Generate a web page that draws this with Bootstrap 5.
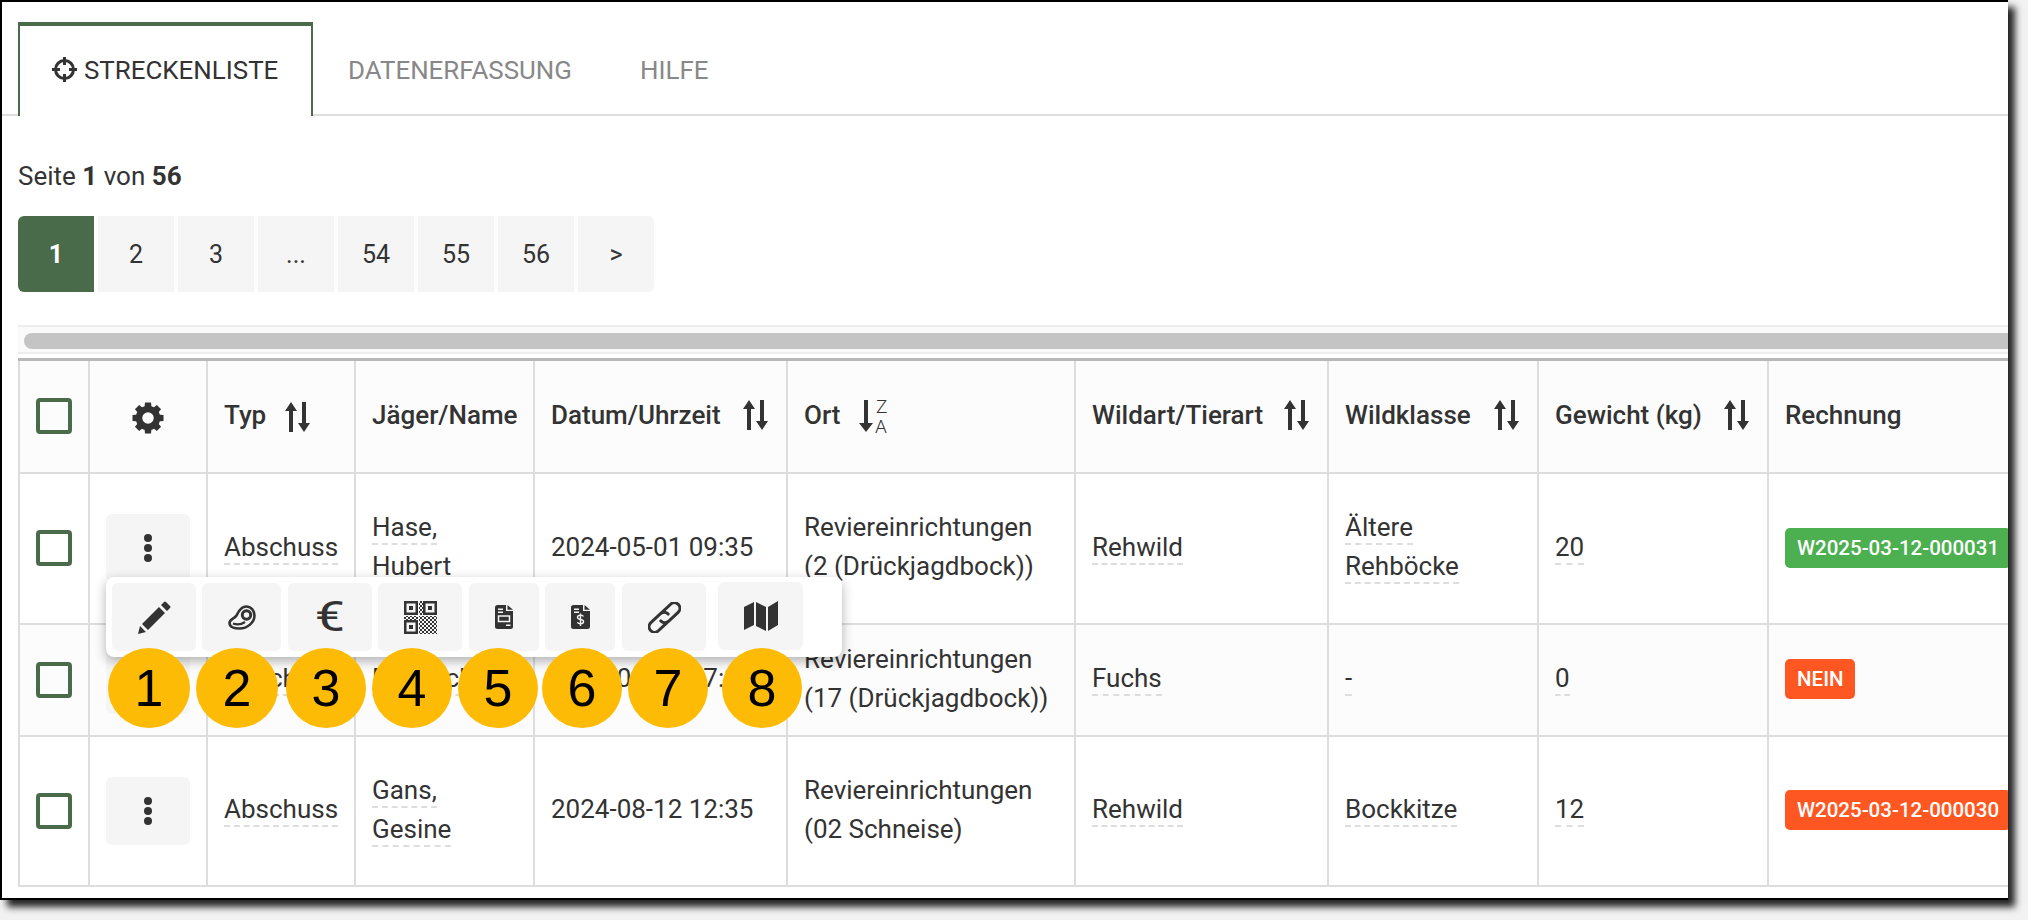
<!DOCTYPE html>
<html lang="de">
<head>
<meta charset="utf-8">
<title>Streckenliste</title>
<link rel="stylesheet" href="https://cdn.jsdelivr.net/npm/bootstrap@5.3.0/dist/css/bootstrap.min.css">
<style>
html,body{margin:0;background:#f2f2f2;height:920px;overflow:hidden}
body{font-family:Roboto,"Liberation Sans",sans-serif;color:#333;font-size:26px;line-height:39px}
.shot{position:relative;width:2008px;height:900px;background:#fff;border-top:2px solid #000;border-left:2px solid #000;border-bottom:2px solid #000;box-shadow:7px 7px 7px rgba(0,0,0,.85)}
.shot-clip{position:absolute;inset:0;overflow:hidden}
.tabbar{margin-top:20px;padding-left:16px;border-bottom:2px solid #ddd;height:94px;flex-wrap:nowrap}
.tabbar .nav-link{height:94px;border:0;border-radius:0;color:#888;font-size:25.9px;line-height:30px;padding:33px 33px 0 35px;background:transparent;margin:0;text-transform:uppercase;display:flex;gap:7px;align-items:flex-start}
.tabbar .nav-link.active{color:#333;background:#fff;border-top:4px solid #4a6b4a;border-left:2px solid #4a6b4a;border-right:2px solid #4a6b4a;padding:29px 30px 0 32px;height:94px;width:295px}
.tabbar .ic-cross{margin-top:2px;flex:none}
.pageinfo{margin:41px 0 0 16px;line-height:39px;height:39px;font-size:26px}
.pageinfo b{font-weight:700}
.pager{margin:20px 0 0 16px;gap:4px;--bs-pagination-border-width:0}
.pager .page-link{width:76px;height:76px;display:flex;align-items:center;justify-content:center;background:#f5f5f5;color:#333;border:0;border-radius:0;font-size:25px;margin:0;padding:0}
.pager .page-item:first-child .page-link{border-radius:6px 0 0 6px}
.pager .page-item.active .page-link{background:#4a6b4a;color:#fff;font-weight:700}
.pager .page-item:not(:first-child) .page-link{margin-left:0}
.scrolltrack{margin:33px 0 0 16px;height:29px;background:#fafafa;border-top:2px solid #eee;border-bottom:2px solid #eee;padding:6px 0 0 6px}
.scrollthumb{height:16px;background:#c4c4c4;border-radius:8px 0 0 8px}
.gridwrap{margin:4px 0 0 16px;overflow:hidden}
.grid{table-layout:fixed;width:2011px;border-collapse:collapse;margin:0;--bs-table-bg:transparent;color:#333}
.grid th,.grid td{border:2px solid #ddd;padding:0 16px 2px;vertical-align:middle;color:#333;background:transparent;box-shadow:none}
.grid th{font-weight:500;font-size:26px;background:#fcfcfc;border-top:3px solid #b8b8b8;white-space:nowrap}
.hdrow{height:113px}.rowa{height:151px}.rowb{height:112px;background:#fcfcfc}.rowc{height:150px}
.w1{width:70px}.w2{width:118px}.w3{width:148px}.w4{width:179px}.w5{width:253px}.w6{width:288px}.w7{width:253px}.w8{width:210px}.w9{width:230px}.w10{width:262px}
.tick{display:block;width:36px;height:36px;border:4px solid #4a6b4a;border-radius:4px;margin:0 auto}
.grid .cellc{padding:0;text-align:center}
.dash{border-bottom:2px dashed #ddd;padding-bottom:1px}
.dotbtn{width:84px;height:68px;background:#f5f5f5;border:0;border-radius:6px;display:flex;align-items:center;justify-content:center;margin:0 auto;padding:0}
.sorter{display:inline-block;vertical-align:middle;margin-left:19px}
.hflex{display:flex;align-items:center;justify-content:space-between;padding-right:2px}
.tagpill{display:inline-block;color:#fff;font-weight:500;font-size:20.5px;line-height:40px;height:40px;padding:0 12px;border-radius:5px;white-space:nowrap;vertical-align:middle}
.tag-green{background:#4caf50}.tag-red{background:#ff5722}
.popmenu{position:absolute;left:104px;top:575px;width:736px;height:80px;background:#fff;border-radius:8px;box-shadow:0 4px 12px rgba(0,0,0,.3);display:flex;padding:6px;gap:6px;z-index:5}
.actbtn{background:#f5f5f5;border:0;border-radius:6px;height:68px;padding:0;display:flex;align-items:center;justify-content:center;flex:none}
.a84{width:84px}.a79{width:79px;margin-right:1px}.a70{width:70px}.nudge{margin-left:1px}
.amap{margin-left:6px;margin-top:-1px;width:85px}
.euro{display:inline-block;font-size:42px;font-weight:400;line-height:1;color:#333;transform:scaleX(1.28)}
.marker{position:absolute;top:646px;width:80px;height:80px;border-radius:50%;background:#fdbb05;color:#000;font-family:"Liberation Sans",Arial,sans-serif;font-size:52px;line-height:80px;text-align:center;z-index:6}
.m1{left:106px;width:82px}.m2{left:194px;width:82px}.m3{left:284px}.m4{left:370px}.m5{left:456px}.m6{left:540px}.m7{left:626px}.m8{left:720px}
</style>
</head>
<body>
<div class="shot">
<div class="shot-clip">
  <ul class="nav nav-tabs tabbar">
    <li class="nav-item"><a class="nav-link active" href="#">
      <svg class="ic-cross" width="25" height="25" viewBox="0 0 25 25"><circle cx="12.5" cy="12.5" r="9" fill="none" stroke="#333" stroke-width="3"/><path d="M12.5 0v8M12.5 17v8M0 12.5h8M17 12.5h8" stroke="#333" stroke-width="3"/></svg>
      Streckenliste</a></li>
    <li class="nav-item"><a class="nav-link" href="#">Datenerfassung</a></li>
    <li class="nav-item"><a class="nav-link" href="#">Hilfe</a></li>
  </ul>
  <p class="pageinfo">Seite <b>1</b> von <b>56</b></p>
  <ul class="pagination pager">
    <li class="page-item active"><a class="page-link" href="#">1</a></li>
    <li class="page-item"><a class="page-link" href="#">2</a></li>
    <li class="page-item"><a class="page-link" href="#">3</a></li>
    <li class="page-item"><a class="page-link" href="#">...</a></li>
    <li class="page-item"><a class="page-link" href="#">54</a></li>
    <li class="page-item"><a class="page-link" href="#">55</a></li>
    <li class="page-item"><a class="page-link" href="#">56</a></li>
    <li class="page-item"><a class="page-link" href="#">&gt;</a></li>
  </ul>
  <div class="scrolltrack"><div class="scrollthumb"></div></div>
  <div class="gridwrap">
  <table class="table grid">
    <colgroup><col class="w1"><col class="w2"><col class="w3"><col class="w4"><col class="w5"><col class="w6"><col class="w7"><col class="w8"><col class="w9"><col class="w10"></colgroup>
    <thead><tr class="hdrow">
      <th class="cellc"><span class="tick"></span></th>
      <th class="cellc"><svg width="32" height="32" viewBox="0 0 32 32"><g fill="#333"><path d="M13 .5h6l.6 6h-7.200zM12.400 25.500h7.200l-.6 6h-6z"/><path d="M13 .5h6l.6 6h-7.200zM12.400 25.500h7.200l-.6 6h-6z" transform="rotate(45 16 16)"/><path d="M13 .5h6l.6 6h-7.200zM12.400 25.500h7.200l-.6 6h-6z" transform="rotate(90 16 16)"/><path d="M13 .5h6l.6 6h-7.200zM12.400 25.500h7.200l-.6 6h-6z" transform="rotate(135 16 16)"/></g><circle cx="16" cy="16" r="9" fill="none" stroke="#333" stroke-width="6.500"/></svg></th>
      <th>Typ<svg class="sorter" width="25" height="30" viewBox="0 0 25 30"><path d="M6 0l6 9H8v21H4V9H0zM19 30l6-9h-4V0h-4v21h-4z" fill="#333"/></svg></th>
      <th>Jäger/Name</th>
      <th><span class="hflex">Datum/Uhrzeit<svg width="25" height="30" viewBox="0 0 25 30"><path d="M6 0l6 9H8v21H4V9H0zM19 30l6-9h-4V0h-4v21h-4z" fill="#333"/></svg></span></th>
      <th>Ort<svg class="sorter" width="34" height="34" viewBox="0 0 34 34"><path d="M7 32l7-9H9V0H5v23H0z" fill="#333"/><text x="17" y="13" font-family="Roboto,sans-serif" font-size="19" font-weight="300" fill="#333">Z</text><text x="16" y="33" font-family="Roboto,sans-serif" font-size="19" font-weight="300" fill="#333">A</text></svg></th>
      <th><span class="hflex">Wildart/Tierart<svg width="25" height="30" viewBox="0 0 25 30"><path d="M6 0l6 9H8v21H4V9H0zM19 30l6-9h-4V0h-4v21h-4z" fill="#333"/></svg></span></th>
      <th><span class="hflex">Wildklasse<svg width="25" height="30" viewBox="0 0 25 30"><path d="M6 0l6 9H8v21H4V9H0zM19 30l6-9h-4V0h-4v21h-4z" fill="#333"/></svg></span></th>
      <th><span class="hflex">Gewicht (kg)<svg width="25" height="30" viewBox="0 0 25 30"><path d="M6 0l6 9H8v21H4V9H0zM19 30l6-9h-4V0h-4v21h-4z" fill="#333"/></svg></span></th>
      <th>Rechnung</th>
    </tr></thead>
    <tbody>
    <tr class="rowa">
      <td class="cellc"><span class="tick"></span></td>
      <td class="cellc"><button class="dotbtn"><svg width="10" height="28" viewBox="0 0 10 28"><g fill="#333"><circle cx="5" cy="4" r="4"/><circle cx="5" cy="14" r="4"/><circle cx="5" cy="24" r="4"/></g></svg></button></td>
      <td><span class="dash">Abschuss</span></td>
      <td><span class="dash">Hase,</span><br><span class="dash">Hubert</span></td>
      <td>2024-05-01 09:35</td>
      <td>Reviereinrichtungen<br>(2 (Drückjagdbock))</td>
      <td><span class="dash">Rehwild</span></td>
      <td><span class="dash">Ältere</span><br><span class="dash">Rehböcke</span></td>
      <td><span class="dash">20</span></td>
      <td><span class="tagpill tag-green">W2025-03-12-000031</span></td>
    </tr>
    <tr class="rowb">
      <td class="cellc"><span class="tick"></span></td>
      <td class="cellc"><button class="dotbtn"><svg width="10" height="28" viewBox="0 0 10 28"><g fill="#333"><circle cx="5" cy="4" r="4"/><circle cx="5" cy="14" r="4"/><circle cx="5" cy="24" r="4"/></g></svg></button></td>
      <td><span class="dash">Abschuss</span></td>
      <td><span class="dash">Rehbock</span></td>
      <td>2024-06-01 07:30</td>
      <td>Reviereinrichtungen<br>(17 (Drückjagdbock))</td>
      <td><span class="dash">Fuchs</span></td>
      <td><span class="dash">-</span></td>
      <td><span class="dash">0</span></td>
      <td><span class="tagpill tag-red">NEIN</span></td>
    </tr>
    <tr class="rowc">
      <td class="cellc"><span class="tick"></span></td>
      <td class="cellc"><button class="dotbtn"><svg width="10" height="28" viewBox="0 0 10 28"><g fill="#333"><circle cx="5" cy="4" r="4"/><circle cx="5" cy="14" r="4"/><circle cx="5" cy="24" r="4"/></g></svg></button></td>
      <td><span class="dash">Abschuss</span></td>
      <td><span class="dash">Gans,</span><br><span class="dash">Gesine</span></td>
      <td>2024-08-12 12:35</td>
      <td>Reviereinrichtungen<br>(02 Schneise)</td>
      <td><span class="dash">Rehwild</span></td>
      <td><span class="dash">Bockkitze</span></td>
      <td><span class="dash">12</span></td>
      <td><span class="tagpill tag-red">W2025-03-12-000030</span></td>
    </tr>
    </tbody>
  </table>
  </div>

  <div class="popmenu">
    <button class="actbtn a84"><svg width="33" height="33" viewBox="0 0 33 33"><path d="M0 33l2-8 6 6zM4 23L21 6l6 6-17 17zM23 4l3-3a1.4 1.4 0 0 1 2 0l4 4a1.4 1.4 0 0 1 0 2l-3 3z" fill="#333"/></svg></button>
    <button class="actbtn a79"><svg width="28" height="25" viewBox="0 0 28 25"><path d="M18 1.500c5 0 8.500 4 8.500 9 0 7-7 13-15 13-5 0-10-1.500-10-5.500 0-4 5-4 7-7.500 2-3.500 4-9 9.500-9z" fill="none" stroke="#333" stroke-width="2.600"/><path d="M5 18.500c4 1.500 9 .5 12-1.500" fill="none" stroke="#333" stroke-width="2.400"/><circle cx="18.500" cy="10" r="4.200" fill="none" stroke="#333" stroke-width="3"/></svg></button>
    <button class="actbtn a84"><span class="euro">€</span></button>
    <button class="actbtn a84"><svg width="33" height="33" viewBox="0 0 33 33"><defs><pattern id="chk" width="4" height="4" patternUnits="userSpaceOnUse"><rect width="2" height="2" fill="#333"/><rect x="2" y="2" width="2" height="2" fill="#333"/></pattern></defs><g fill="none" stroke="#333" stroke-width="2.500"><rect x="1.250" y="1.250" width="11.500" height="11.500"/><rect x="20.250" y="1.250" width="11.500" height="11.500"/><rect x="1.250" y="20.250" width="11.500" height="11.500"/></g><g fill="#333"><rect x="5" y="5" width="4" height="4"/><rect x="24" y="5" width="4" height="4"/><rect x="5" y="24" width="4" height="4"/></g><rect x="15" y="0" width="4" height="14" fill="url(#chk)"/><rect x="0" y="15" width="14" height="4" fill="url(#chk)"/><rect x="15" y="15" width="18" height="18" fill="url(#chk)"/></svg></button>
    <button class="actbtn a70 nudge"><svg width="18" height="24" viewBox="0 0 18 24"><path d="M2.500 0H11v6h7v15.500a2.500 2.500 0 0 1-2.500 2.500h-13A2.500 2.500 0 0 1 0 21.500v-19A2.500 2.500 0 0 1 2.500 0zM12.500 0L18 4.800h-5.500z" fill="#333"/><g fill="#f5f5f5"><rect x="3" y="3.500" width="5" height="1.500"/><rect x="3" y="6.500" width="5" height="1.500"/><rect x="11" y="19.500" width="4.500" height="1.500"/></g><rect x="3.500" y="11" width="11" height="5.500" fill="none" stroke="#f5f5f5" stroke-width="1.500"/></svg></button>
    <button class="actbtn a70"><svg width="19" height="24" viewBox="0 0 19 24"><path d="M2.500 0H12v6h7v15.500a2.500 2.500 0 0 1-2.500 2.500h-14A2.500 2.500 0 0 1 0 21.500v-19A2.500 2.500 0 0 1 2.500 0zM13.500 0L19 4.800h-5.500z" fill="#333"/><g fill="#f5f5f5"><rect x="3" y="3.500" width="5" height="1.500"/><rect x="3" y="6.500" width="5" height="1.500"/></g><path d="M12.500 11.500c-.5-1-1.500-1.400-3-1.400-1.700 0-3 .8-3 2.200 0 3 6 1.500 6 4.300 0 1.400-1.300 2.200-3 2.200-1.500 0-2.600-.5-3.100-1.500M9.500 8.500v12.500" fill="none" stroke="#f5f5f5" stroke-width="1.400"/></svg></button>
    <button class="actbtn a84 nudge"><svg width="33" height="31" viewBox="0 0 33 31"><g transform="translate(16.500 15.500) rotate(-43)" fill="none" stroke="#333" stroke-width="3" stroke-linecap="round"><path d="M-2 5.500H-13.500A5.500 5.500 0 0 1-13.500-5.500H0A5.500 5.500 0 0 1 5 0"/><path d="M2-5.500H13.500A5.500 5.500 0 0 1 13.500 5.500H0A5.500 5.500 0 0 1-5 0"/></g></svg></button>
    <button class="actbtn amap"><svg width="34" height="30" viewBox="0 0 34 30"><path d="M0 6l10-5v23L0 29zM12 1l10 5v24l-10-5zM24 6l10-6v24l-10 6z" fill="#333"/></svg></button>
  </div>
  <div class="marker m1">1</div>
  <div class="marker m2">2</div>
  <div class="marker m3">3</div>
  <div class="marker m4">4</div>
  <div class="marker m5">5</div>
  <div class="marker m6">6</div>
  <div class="marker m7">7</div>
  <div class="marker m8">8</div>
</div>
</div>
<script src="https://cdn.jsdelivr.net/npm/bootstrap@5.3.0/dist/js/bootstrap.bundle.min.js"></script>
</body>
</html>
